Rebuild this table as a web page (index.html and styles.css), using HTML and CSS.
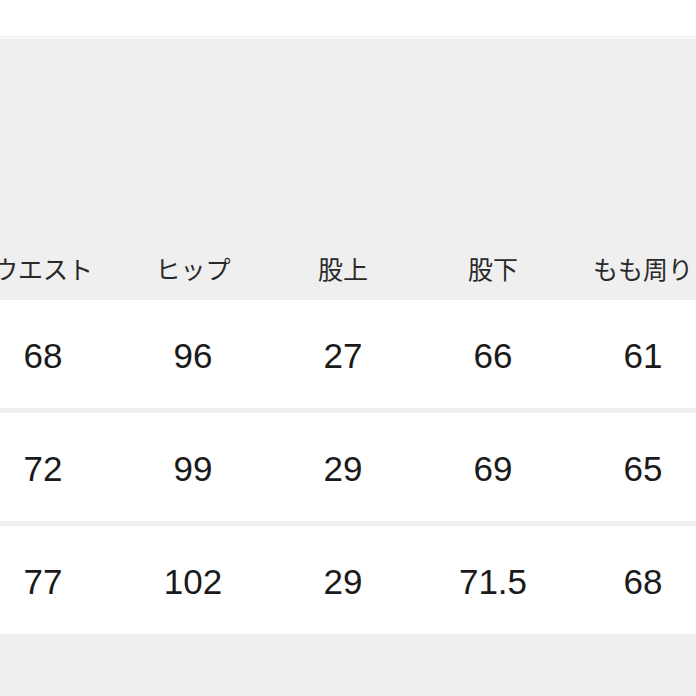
FILE: index.html
```html
<!DOCTYPE html>
<html lang="ja">
<head>
<meta charset="utf-8">
<link rel="stylesheet" href="styles.css">
</head>
<body>
<div class="topbar"></div>
<div class="table">
  <div class="head">
    <div class="cell">ウエスト</div>
    <div class="cell">ヒップ</div>
    <div class="cell">股上</div>
    <div class="cell">股下</div>
    <div class="cell">もも周り</div>
  </div>
  <div class="row">
    <div class="cell">68</div>
    <div class="cell">96</div>
    <div class="cell">27</div>
    <div class="cell">66</div>
    <div class="cell">61</div>
  </div>
  <div class="row">
    <div class="cell">72</div>
    <div class="cell">99</div>
    <div class="cell">29</div>
    <div class="cell">69</div>
    <div class="cell">65</div>
  </div>
  <div class="row">
    <div class="cell">77</div>
    <div class="cell">102</div>
    <div class="cell">29</div>
    <div class="cell">71.5</div>
    <div class="cell">68</div>
  </div>
</div>
</body>
</html>
```

FILE: styles.css
```css
html, body {
  margin: 0;
  padding: 0;
}
body {
  width: 696px;
  height: 696px;
  overflow: hidden;
  background: #efefef;
  font-family: "Noto Sans CJK JP", "Noto Sans", sans-serif;
}
.topbar {
  height: 36px;
  background: #fff;
  border-bottom: 1px solid #f2f2f2;
  box-shadow: 0 1px 0 #f8f8f8, 0 2px 0 #f7f7f7;
}
.table {
  display: flex;
  flex-direction: column;
  gap: 5px;
}
.head, .row {
  display: grid;
  grid-template-columns: repeat(5, 150px);
  margin-left: -32px;
}
.row {
  background: #fff;
  height: 108px;
  align-items: center;
  width: 760px;
}
.head {
  height: 263px;
  align-items: end;
  margin-bottom: -5px;
}
.head .cell {
  font-size: 25px;
  line-height: 26px;
  color: #2a2a2a;
  padding-bottom: 19px;
  white-space: nowrap;
}
.cell {
  text-align: center;
}
.row .cell {
  font-family: "Liberation Sans", Arial, sans-serif;
  font-size: 35px;
  line-height: 40px;
  padding-top: 3px;
  color: #1a1a1a;
}
```
